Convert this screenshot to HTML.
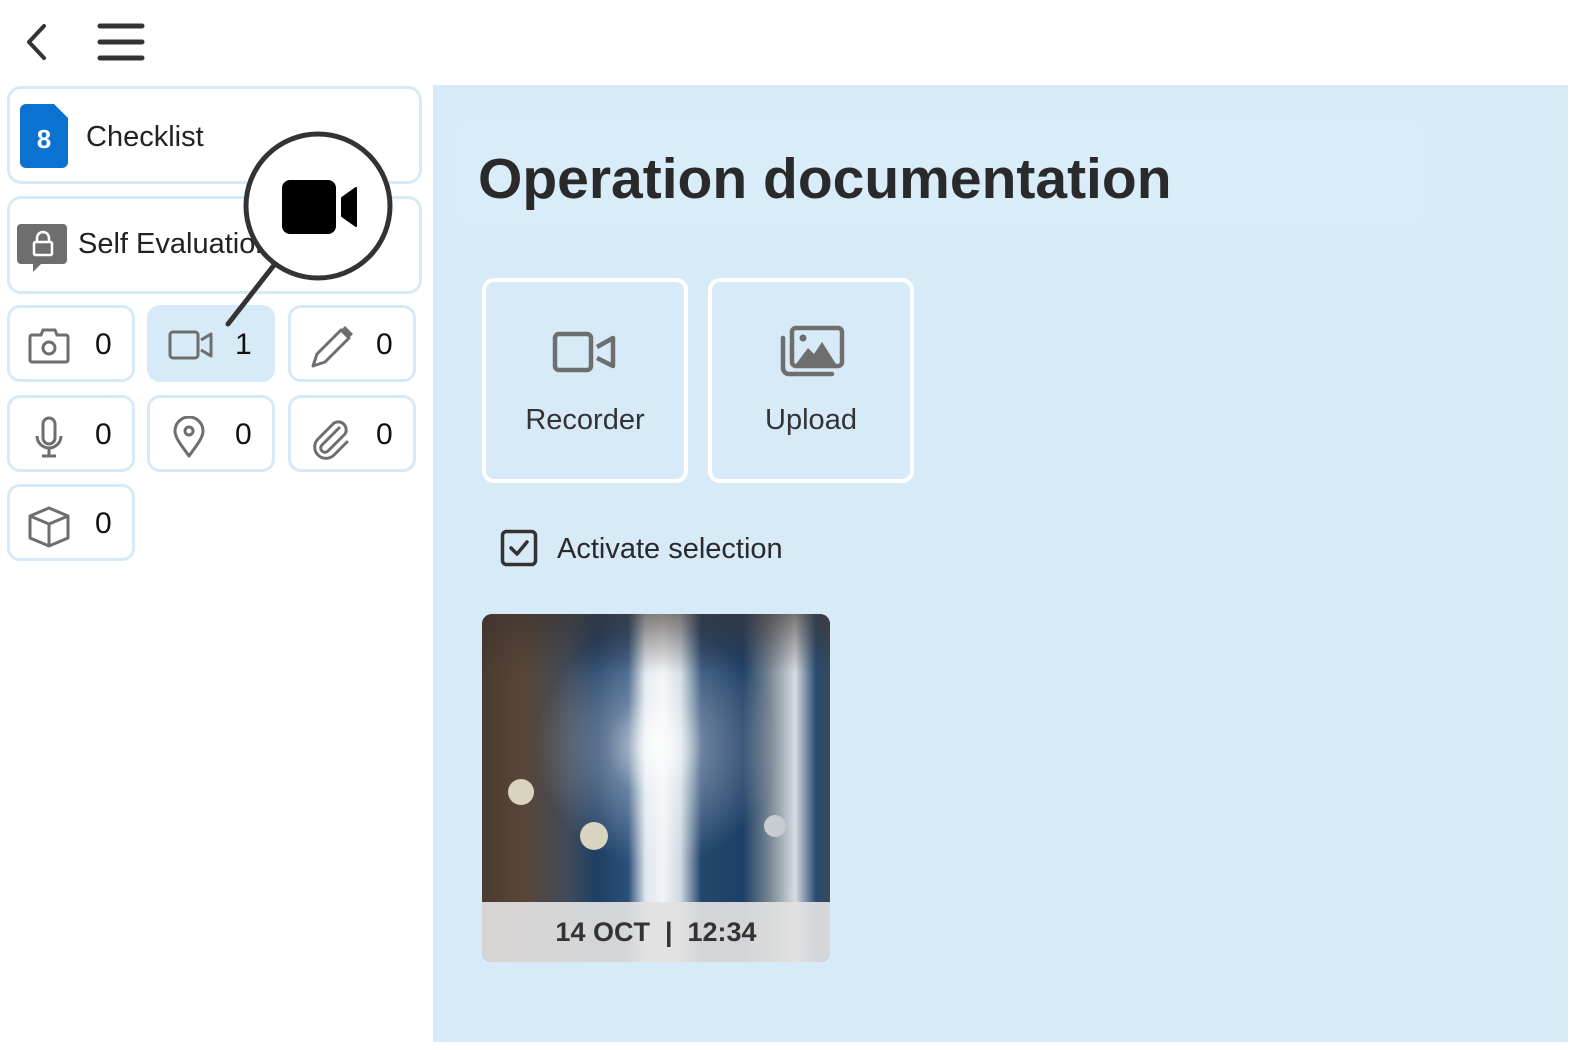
<!DOCTYPE html>
<html><head><meta charset="utf-8"><style>
*{box-sizing:border-box;margin:0;padding:0}
body{width:1580px;height:1050px;background:#fff;font-family:"Liberation Sans",sans-serif;color:#222;position:relative;overflow:hidden}
.abs{position:absolute}
.card{position:absolute;border:3px solid #d6eaf8;border-radius:14px;background:#fff}
.tile{position:absolute;border:3px solid #d6eaf8;border-radius:13px;background:#fff;width:128px;height:77px}
.tile .n{position:absolute;left:85px;top:20px;font-size:30px;color:#111}
.tile svg{position:absolute;left:18px;top:18px}
.panel{position:absolute;left:433px;top:85px;width:1135px;height:957px;background:#d6eaf8}
.btn{position:absolute;border:4px solid #fff;border-radius:12px;width:206px;height:205px;top:278px}
.btn .l{position:absolute;top:122px;width:100%;text-align:center;font-size:29px;color:#333}
</style></head><body>
<svg class="abs" style="left:24px;top:22px" width="26" height="40" viewBox="0 0 26 40"><path d="M20 4 L5 20 L20 36" fill="none" stroke="#333" stroke-width="4" stroke-linecap="round" stroke-linejoin="round"/></svg>
<svg class="abs" style="left:97px;top:22px" width="48" height="40"><g stroke="#333" stroke-width="5" stroke-linecap="round"><line x1="3" y1="4" x2="45" y2="4"/><line x1="3" y1="20" x2="45" y2="20"/><line x1="3" y1="36" x2="45" y2="36"/></g></svg>

<div class="card" style="left:7px;top:86px;width:415px;height:98px"></div>
<svg class="abs" style="left:20px;top:104px" width="48" height="64"><path d="M6 0 H34 L48 14 V58 a6 6 0 0 1 -6 6 H6 a6 6 0 0 1 -6 -6 V6 a6 6 0 0 1 6 -6z" fill="#0a72d1"/><text x="24" y="44" text-anchor="middle" font-family="Liberation Sans" font-weight="bold" font-size="26" fill="#fff">8</text></svg>
<div class="abs" style="left:86px;top:121px;font-size:29px;color:#222">Checklist</div>

<div class="card" style="left:7px;top:196px;width:415px;height:98px"></div>
<svg class="abs" style="left:17px;top:224px" width="50" height="52"><path d="M4 0 H46 a4 4 0 0 1 4 4 V36 a4 4 0 0 1 -4 4 H24 L16 48 V40 H4 a4 4 0 0 1 -4 -4 V4 a4 4 0 0 1 4 -4z" fill="#6e6e6e"/><rect x="17" y="18" width="18" height="13" rx="1.5" fill="none" stroke="#fff" stroke-width="2.5"/><path d="M20 18 v-4 a6 6 0 0 1 12 0 v4" fill="none" stroke="#fff" stroke-width="2.5"/></svg>
<div class="abs" style="left:78px;top:228px;font-size:29px;color:#222;width:185px;overflow:hidden;white-space:nowrap">Self Evaluation</div>

<div class="tile" style="left:7px;top:305px"><svg width="44" height="40" viewBox="0 0 44 40"><path d="M4 9 H13 L15 4 H27 L29 9 H38 a2 2 0 0 1 2 2 V34 a2 2 0 0 1 -2 2 H4 a2 2 0 0 1 -2 -2 V11 a2 2 0 0 1 2 -2z" fill="none" stroke="#6e6e6e" stroke-width="3"/><circle cx="21" cy="22" r="6" fill="none" stroke="#6e6e6e" stroke-width="3"/></svg><span class="n">0</span></div>
<div class="tile" style="left:147px;top:305px;background:#d6eaf8"><svg width="48" height="36" viewBox="0 0 48 36"><rect x="2" y="6" width="28" height="26" rx="3" fill="none" stroke="#6e6e6e" stroke-width="3"/><path d="M33 14 L43 8 V30 L33 24" fill="none" stroke="#6e6e6e" stroke-width="3" stroke-linejoin="round"/></svg><span class="n">1</span></div>
<div class="tile" style="left:288px;top:305px"><svg width="44" height="44" viewBox="0 0 44 44"><path d="M4 40 L8 28 L32 4 L40 12 L16 36 Z" fill="none" stroke="#6e6e6e" stroke-width="3" stroke-linejoin="round"/><path d="M32 4 L36 0 L44 8 L40 12 Z" fill="#6e6e6e"/></svg><span class="n">0</span></div>
<div class="tile" style="left:7px;top:395px"><svg width="44" height="44" viewBox="0 0 44 44"><rect x="15" y="2" width="12" height="26" rx="6" fill="none" stroke="#6e6e6e" stroke-width="3"/><path d="M9 20 a12 12 0 0 0 24 0 M21 32 V40 M14 40 H28" fill="none" stroke="#6e6e6e" stroke-width="3"/></svg><span class="n">0</span></div>
<div class="tile" style="left:147px;top:395px"><svg width="44" height="44" viewBox="0 0 44 44"><path d="M21 40 C14 30 7 22 7 15 a14 14 0 0 1 28 0 C35 22 28 30 21 40Z" fill="none" stroke="#6e6e6e" stroke-width="3" stroke-linejoin="round"/><circle cx="21" cy="15" r="4" fill="none" stroke="#6e6e6e" stroke-width="3"/></svg><span class="n">0</span></div>
<div class="tile" style="left:288px;top:395px"><svg width="44" height="44" viewBox="0 0 44 44"><path d="M30 12 L13 29 a4 4 0 0 0 6 6 L36 18 a8 8 0 0 0 -11 -11 L9 23 a11 11 0 0 0 16 16 L38 26" fill="none" stroke="#6e6e6e" stroke-width="3" stroke-linecap="round"/></svg><span class="n">0</span></div>
<div class="tile" style="left:7px;top:484px"><svg width="44" height="44" viewBox="0 0 44 44"><path d="M21 3 L40 11 V33 L21 41 L2 33 V11 Z M2 11 L21 19 L40 11 M21 19 V41" fill="none" stroke="#6e6e6e" stroke-width="3" stroke-linejoin="round"/></svg><span class="n">0</span></div>

<div class="panel"></div>
<div class="abs" style="left:455px;top:120px;width:970px;height:106px;background:#d9ecf9;border-radius:8px"></div>
<div class="abs" style="left:478px;top:146px;font-size:57px;font-weight:bold;color:#2a2a2a;white-space:nowrap">Operation documentation</div>

<div class="btn" style="left:482px"><svg class="abs" style="left:66px;top:48px" width="66" height="46" viewBox="0 0 66 46"><rect x="3" y="4" width="36" height="36" rx="4" fill="none" stroke="#6e6e6e" stroke-width="4.5"/><path d="M45 17 L61 8 V36 L45 28" fill="none" stroke="#6e6e6e" stroke-width="4.5" stroke-linejoin="round"/></svg><div class="l">Recorder</div></div>
<div class="btn" style="left:708px"><svg class="abs" style="left:66px;top:42px" width="68" height="56" viewBox="0 0 68 56"><rect x="14" y="4" width="50" height="38" rx="4" fill="none" stroke="#6e6e6e" stroke-width="4.5"/><path d="M18 40 L30 24 L36 30 L44 18 L58 40Z" fill="#6e6e6e"/><circle cx="25" cy="14" r="3.5" fill="#6e6e6e"/><path d="M5 14 V44 a6 6 0 0 0 6 6 H54" fill="none" stroke="#6e6e6e" stroke-width="4.5" stroke-linecap="round"/></svg><div class="l">Upload</div></div>

<svg class="abs" style="left:500px;top:529px" width="38" height="38"><rect x="2.5" y="2.5" width="33" height="33" rx="4" fill="none" stroke="#333" stroke-width="3.5"/><path d="M11 19 L17 25 L27 13" fill="none" stroke="#333" stroke-width="3.5" stroke-linecap="round" stroke-linejoin="round"/></svg>
<div class="abs" style="left:557px;top:533px;font-size:29px;color:#2a2a2a">Activate selection</div>

<div class="abs" style="left:482px;top:614px;width:348px;height:348px;border-radius:10px;overflow:hidden;background:linear-gradient(90deg,#4a3a30 0%,#5a4638 12%,#3f4a5a 25%,#1e3f66 33%,#2a4f7a 42%,#dfe6ee 47%,#f2f4f6 52%,#cfd9e3 57%,#24476e 63%,#1e3f66 75%,#7d8a96 83%,#d8dde2 90%,#274a70 96%,#3a4a5a 100%)">
 <div class="abs" style="left:0;top:0;width:348px;height:348px;background:radial-gradient(circle at 50% 38%,rgba(255,255,255,0.8) 0,rgba(255,255,255,0.3) 50px,rgba(255,255,255,0) 120px)"></div>
 <div class="abs" style="left:0;top:0;width:348px;height:60px;background:linear-gradient(rgba(60,50,45,0.6),rgba(0,0,0,0))"></div>
 <div class="abs" style="left:26px;top:165px;width:26px;height:26px;border-radius:50%;background:#d8d4c0"></div>
 <div class="abs" style="left:98px;top:208px;width:28px;height:28px;border-radius:50%;background:#d8d4c0"></div>
 <div class="abs" style="left:282px;top:201px;width:22px;height:22px;border-radius:50%;background:#c8ccd0"></div>
 <div class="abs" style="left:0;top:288px;width:348px;height:60px;background:rgba(225,225,225,0.93)"></div>
 <div class="abs" style="left:0;top:303px;width:348px;text-align:center;font-size:27px;font-weight:bold;color:#333;white-space:pre">14 OCT  |  12:34</div>
</div>

<svg class="abs" style="left:220px;top:130px" width="180" height="200"><line x1="8" y1="194" x2="58" y2="130" stroke="#333" stroke-width="5" stroke-linecap="round"/><circle cx="98" cy="76" r="72" fill="#fff" stroke="#333" stroke-width="5"/><rect x="62" y="50" width="54" height="54" rx="8" fill="#000"/><path d="M122 68 L136 58 V96 L122 86Z" fill="#000" stroke="#000" stroke-width="2" stroke-linejoin="round"/></svg>
</body></html>
